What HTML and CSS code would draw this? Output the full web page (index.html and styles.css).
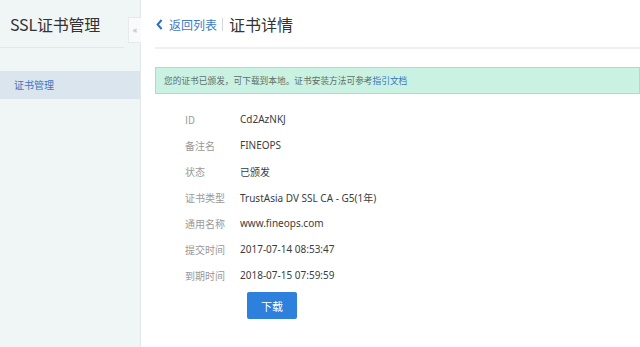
FILE: index.html
```html
<!DOCTYPE html>
<html lang="zh">
<head>
<meta charset="utf-8">
<link rel="stylesheet" href="styles.css">
</head>
<body>
<div class="app">
  <aside class="sidebar">
    <div class="side-title">SSL证书管理</div>
    <div class="side-item">证书管理</div>
    <div class="collapse">«</div>
  </aside>
  <main class="main">
    <header class="head">
      <svg class="back-icon" width="7" height="11" viewBox="0 0 7 11"><path d="M5.6 1 L1.6 5.5 L5.6 10" fill="none" stroke="#2f6fb8" stroke-width="2"/></svg>
      <span class="back">返回列表</span>
      <span class="sep"></span>
      <span class="page-title">证书详情</span>
    </header>
    <div class="notice">您的证书已颁发，可下载到本地。证书安装方法可参考<span class="link">指引文档</span></div>
    <div class="details">
      <div class="row"><span class="label">ID</span><span class="value">Cd2AzNKJ</span></div>
      <div class="row"><span class="label">备注名</span><span class="value">FINEOPS</span></div>
      <div class="row"><span class="label">状态</span><span class="value">已颁发</span></div>
      <div class="row"><span class="label">证书类型</span><span class="value">TrustAsia DV SSL CA - G5(1年)</span></div>
      <div class="row"><span class="label">通用名称</span><span class="value">www.fineops.com</span></div>
      <div class="row"><span class="label">提交时间</span><span class="value">2017-07-14 08:53:47</span></div>
      <div class="row"><span class="label">到期时间</span><span class="value">2018-07-15 07:59:59</span></div>
      <button class="btn">下载</button>
    </div>
  </main>
</div>
</body>
</html>
```
FILE: styles.css
```css
* { box-sizing: border-box; }
html, body { margin: 0; padding: 0; background: #fff; }
body {
  font-family: "Noto Sans", "Noto Sans CJK SC", sans-serif;
  width: 640px;
  height: 347px;
  overflow: hidden;
}
.app { display: flex; height: 347px; }
.sidebar {
  position: relative;
  width: 141px;
  flex: none;
  background: #f0f5f6;
  border-right: 1px solid #e2e7e9;
}
.side-title {
  font-family: "Noto Sans CJK SC", sans-serif;
  font-size: 16px;
  color: #333;
  height: 48px;
  line-height: 48px;
  padding-left: 10px;
  margin-right: 16px;
  border-bottom: 1px solid #e2e8ea;
  letter-spacing: -0.2px;
}
.side-item {
  margin-top: 23px;
  height: 28px;
  line-height: 28px;
  background: #dbe5ee;
  color: #3a76c0;
  font-family: "Noto Sans CJK SC", sans-serif;
  font-size: 10px;
  padding-left: 14px;
}
.collapse {
  position: absolute;
  top: 17px;
  right: -1px;
  width: 13px;
  height: 26px;
  background: #f8fafb;
  border: 1px solid #e6eaec;
  border-right: none;
  color: #b0b6ba;
  font-size: 9px;
  line-height: 24px;
  text-align: center;
}
.main { flex: 1; padding-left: 14px; }
.head {
  height: 49px;
  display: flex;
  align-items: center;
  border-bottom: 2px solid #eef0f1;
  padding-top: 1px;
}
.back-icon { margin-left: 1px; margin-right: 6px; }
.back {
  font-family: "Noto Sans CJK SC", sans-serif;
  font-size: 12px;
  color: #3d7cc4;
}
.sep {
  width: 1px;
  height: 13px;
  background: #d5d9dc;
  margin: 0 6px 0 5px;
}
.page-title {
  font-family: "Noto Sans CJK SC", sans-serif;
  font-size: 16px;
  color: #333;
}
.notice {
  margin-top: 18px;
  height: 27px;
  line-height: 25px;
  background: #c9f2e2;
  border: 1px solid #a9dfca;
  padding-left: 8px;
  font-family: "Noto Sans CJK SC", sans-serif;
  font-size: 8.7px;
  color: #5f6e68;
}
.link { color: #3a72c0; }
.details { padding-left: 30px; padding-top: 12px; }
.row {
  display: flex;
  align-items: center;
  height: 26px;
}
.label {
  width: 55px;
  flex: none;
  font-family: "Noto Sans CJK SC", sans-serif;
  font-size: 10px;
  color: #999;
}
.value {
  font-family: "Noto Sans", "Noto Sans CJK SC", sans-serif;
  font-size: 10px;
  color: #3c3c3c;
}
.btn {
  display: block;
  margin-top: 4px;
  margin-left: 62px;
  width: 50px;
  height: 27px;
  border: none;
  border-radius: 2px;
  background: #2d80dc;
  color: #fff;
  font-family: "Noto Sans CJK SC", sans-serif;
  font-size: 11px;
  padding: 0;
}
```
